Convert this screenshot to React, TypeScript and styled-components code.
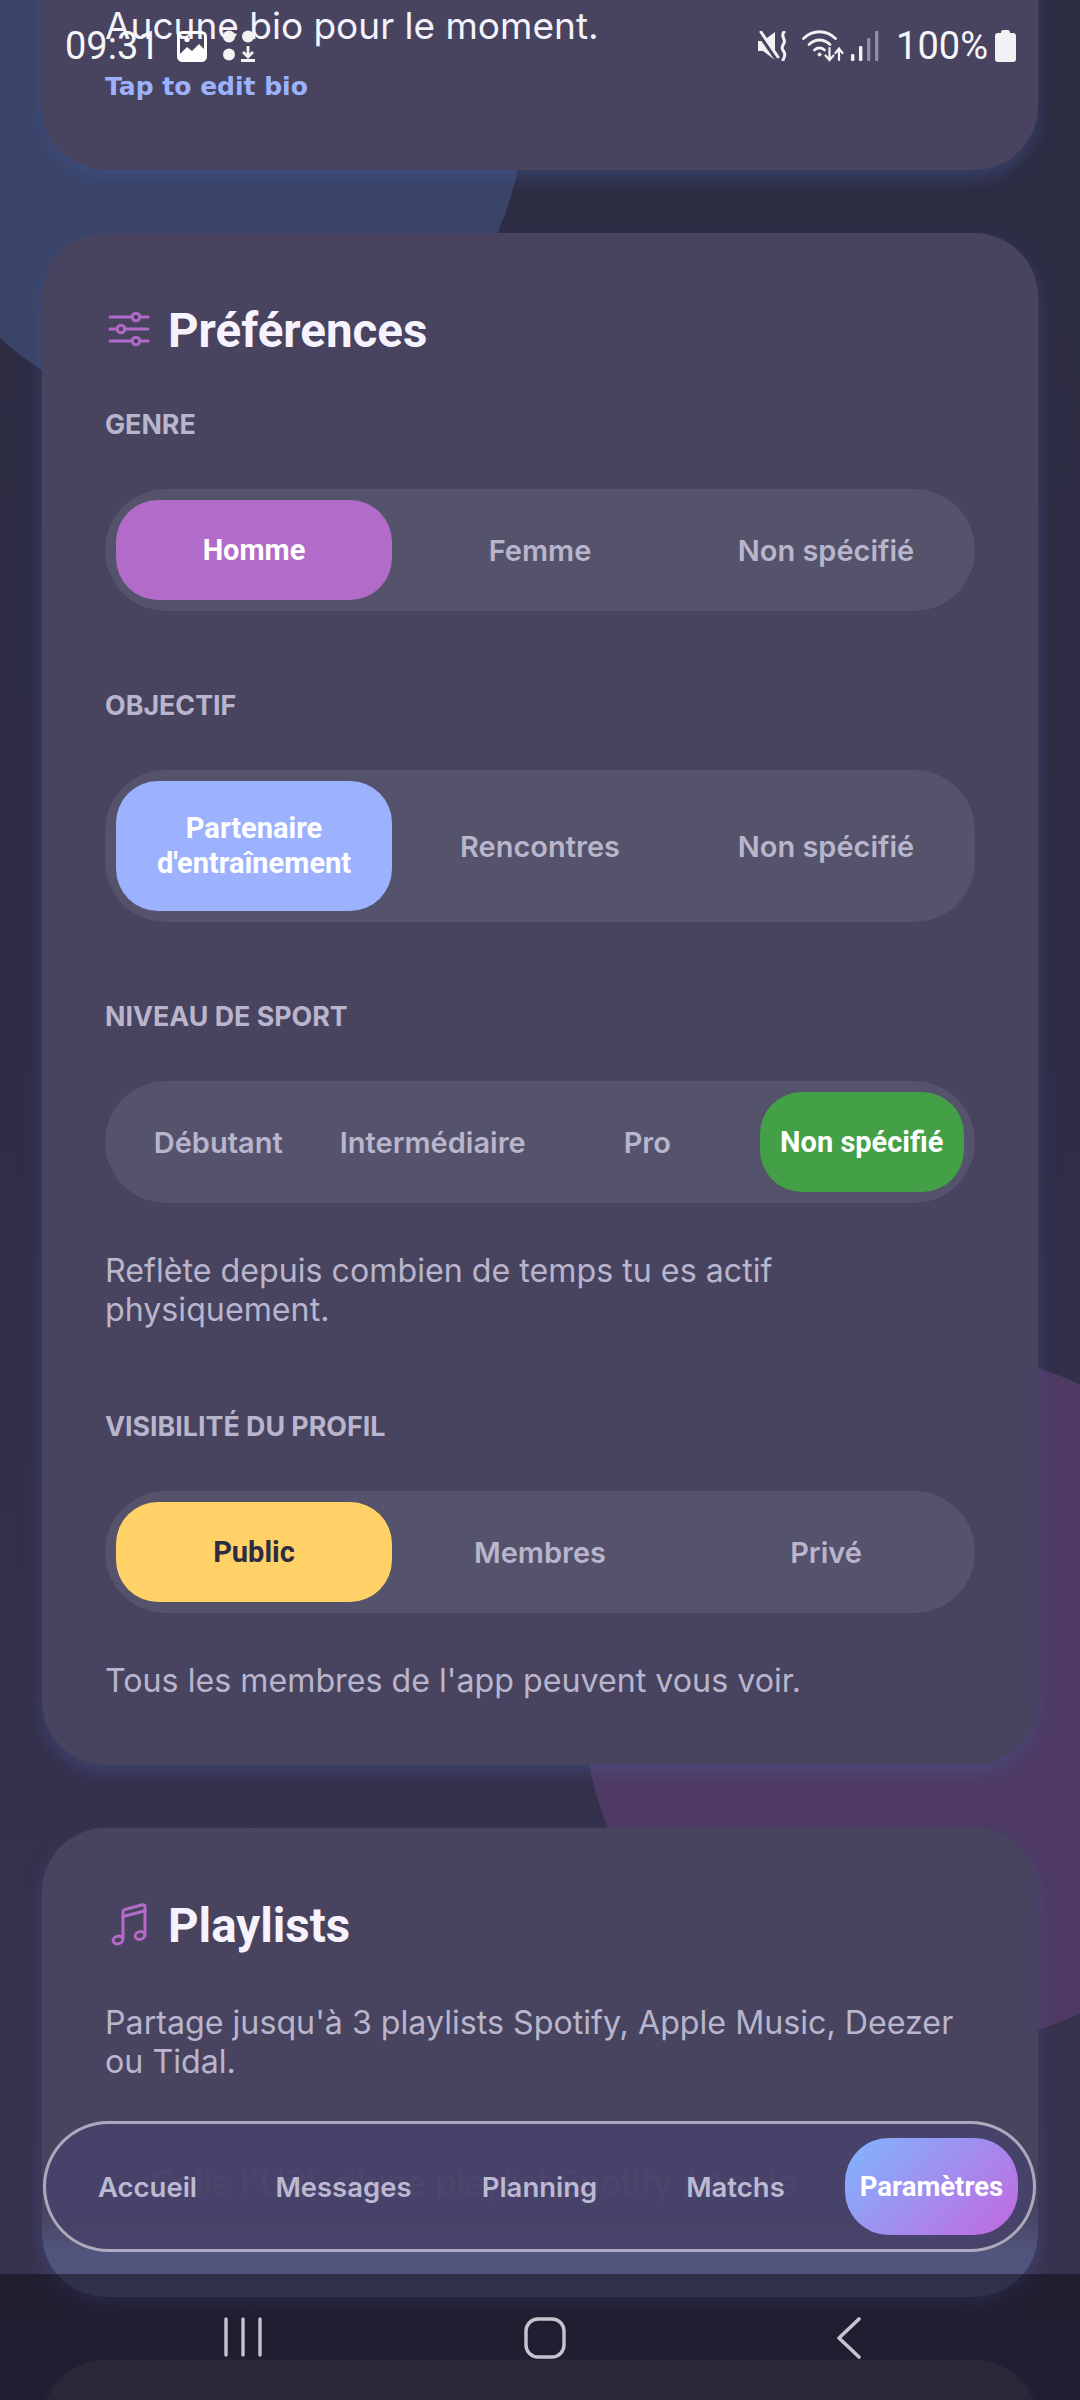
import React from 'react'
import styled, { createGlobalStyle } from 'styled-components'

const GlobalStyle = createGlobalStyle`
    html, body {
        margin: 0;
        padding: 0;
        background: #2c2c42;
    }
    * {
        box-sizing: border-box;
    }
`

type Option = { label: string; active?: string; dark?: boolean }

const genre: Option[] = [{ label: 'Homme', active: '#b26bc8' }, { label: 'Femme' }, { label: 'Non spécifié' }]
const goal: Option[] = [
    { label: "Partenaire d'entraînement", active: '#9db2ff' },
    { label: 'Rencontres' },
    { label: 'Non spécifié' },
]
const level: Option[] = [
    { label: 'Débutant' },
    { label: 'Intermédiaire' },
    { label: 'Pro' },
    { label: 'Non spécifié', active: '#43a047' },
]
const visibility: Option[] = [{ label: 'Public', active: '#ffd166', dark: true }, { label: 'Membres' }, { label: 'Privé' }]

const tabs = ['Accueil', 'Messages', 'Planning', 'Matchs', 'Paramètres']

function SegmentRow({ options }: { options: Option[] }) {
    return (
        <Segment>
            {options.map((o) => (
                <SegmentItem key={o.label} $active={o.active} $dark={o.dark}>
                    {o.label}
                </SegmentItem>
            ))}
        </Segment>
    )
}

function SlidersIcon() {
    return (
        <TitleIcon width="48" height="36" viewBox="0 0 48 36" fill="none" stroke="#b26bc8" strokeWidth="3" strokeLinecap="round">
            <path d="M5 6H27M35 6H43M5 18H12M20 18H43M5 30H27M35 30H43" />
            <circle cx="31" cy="6" r="3.8" />
            <circle cx="16" cy="18" r="3.8" />
            <circle cx="31" cy="30" r="3.8" />
        </TitleIcon>
    )
}

function MusicIcon() {
    return (
        <TitleIcon width="48" height="44" viewBox="0 0 48 44" fill="none" stroke="#b26bc8" strokeWidth="3" strokeLinecap="round" strokeLinejoin="round">
            <path d="M18 37V10C18 8.5 18.8 7.8 20 7.5L37.5 2.8C39 2.4 40 3.4 40 5V33" />
            <path d="M18 14.5L40 8.8" />
            <ellipse cx="13" cy="38" rx="5" ry="3.8" transform="rotate(-18 13 38)" />
            <ellipse cx="35" cy="33.5" rx="5" ry="3.8" transform="rotate(-18 35 33.5)" />
        </TitleIcon>
    )
}

function MuteIcon() {
    return (
        <MuteSvg width="30" height="30" viewBox="0 0 30 30" fill="none">
            <path d="M0 10H5L17 1V29L5 20H0Z" fill="#f2f2f5" />
            <path d="M1 3L19 29" stroke="#484460" strokeWidth="4" />
            <path d="M3 1L20 26" stroke="#f2f2f5" strokeWidth="3" strokeLinecap="round" />
            <path d="M26 1C22 5 28 8 26 12C24 16 23 17 26 21C28 24 26 27 25 29" stroke="#f2f2f5" strokeWidth="3" strokeLinecap="round" />
        </MuteSvg>
    )
}

function WifiIcon() {
    return (
        <WifiSvg width="42" height="32" viewBox="0 0 42 32" fill="none" stroke="#f2f2f5" strokeWidth="2.8" strokeLinecap="round">
            <path d="M1.5 8.5C11 -0.5 24 -0.5 33.5 8.5" />
            <path d="M7 14.5C13.5 8.5 21.5 8.5 28 14.5" />
            <path d="M12.5 20C15.5 17.3 19.5 17.3 22.5 20" />
            <circle cx="17.5" cy="24.5" r="1.6" fill="#f2f2f5" strokeWidth="0.8" />
            <path d="M27.5 18V29M23.5 25.5L27.5 30L31.5 25.5" strokeWidth="2.2" />
            <path d="M37 30V19M33.5 23L37 18.5L40.5 23" strokeWidth="2.2" />
        </WifiSvg>
    )
}

function SignalIcon() {
    return (
        <svg width="28" height="30" viewBox="0 0 28 30">
            <rect x="0" y="23" width="3.4" height="7" rx="1" fill="#f2f2f5" />
            <rect x="8" y="15" width="3.4" height="15" rx="1" fill="#f2f2f5" />
            <rect x="16" y="7" width="3.4" height="23" rx="1" fill="#8f8da3" />
            <rect x="24" y="0" width="3.4" height="30" rx="1" fill="#8f8da3" />
        </svg>
    )
}

function BatteryIcon() {
    return (
        <svg width="21" height="32" viewBox="0 0 21 32">
            <path d="M6 2.5C6 1 7 0 8 0H13C14 0 15 1 15 2.5V3H18C20 3 21 4 21 6V29C21 31 20 32 18 32H3C1 32 0 31 0 29V6C0 4 1 3 3 3H6Z" fill="#f2f2f5" />
        </svg>
    )
}

function GalleryIcon() {
    return (
        <svg width="30" height="31" viewBox="0 0 30 31" fill="none">
            <rect x="1.5" y="1.5" width="27" height="28" rx="4" stroke="#fff" strokeWidth="3" />
            <path d="M3 23L10 16L15 20L22 13L27 18V28H3Z" fill="#fff" />
            <circle cx="10" cy="8.5" r="2.6" fill="#fff" />
        </svg>
    )
}

function DotsIcon() {
    return (
        <DotsSvg width="34" height="32" viewBox="0 0 34 32">
            <circle cx="7" cy="6.5" r="6" fill="#f2f2f5" />
            <circle cx="26" cy="6.5" r="6" fill="#f2f2f5" />
            <circle cx="7" cy="24.5" r="6" fill="#f2f2f5" />
            <path d="M26 16V26M21 22L26 27L31 22M19 30.5H33" stroke="#f2f2f5" strokeWidth="2.8" fill="none" />
        </DotsSvg>
    )
}

export default function App() {
    return (
        <>
            <GlobalStyle />
            <Page>
                <BlueBlob />
                <PurpleBlob />

                <Scroll>
                    <Card>
                        <BioText>Aucune bio pour le moment.</BioText>
                        <BioEdit>Tap to edit bio</BioEdit>
                    </Card>

                    <Card $top>
                        <CardTitle>
                            <SlidersIcon />
                            Préférences
                        </CardTitle>

                        <Label>Genre</Label>
                        <SegmentRow options={genre} />

                        <Label $spaced>Objectif</Label>
                        <SegmentRow options={goal} />

                        <Label $spaced>Niveau de sport</Label>
                        <SegmentRow options={level} />
                        <Note>Reflète depuis combien de temps tu es actif physiquement.</Note>

                        <Label $spaced>Visibilité du profil</Label>
                        <SegmentRow options={visibility} />
                        <Note>Tous les membres de l'app peuvent vous voir.</Note>
                    </Card>

                    <Card $top $glow>
                        <CardTitle>
                            <MusicIcon />
                            Playlists
                        </CardTitle>
                        <PlaylistIntro>Partage jusqu'à 3 playlists Spotify, Apple Music, Deezer ou Tidal.</PlaylistIntro>
                        <UrlField>Colle l'URL d'une playlist Spotify / Apple</UrlField>
                    </Card>

                    <Card $top />
                </Scroll>

                <StatusBar>
                    <StatusGroup>
                        <Clock>09:31</Clock>
                        <GalleryIcon />
                        <DotsIcon />
                    </StatusGroup>
                    <StatusGroup>
                        <MuteIcon />
                        <WifiIcon />
                        <SignalIcon />
                        <Battery>100%</Battery>
                        <BatteryIcon />
                    </StatusGroup>
                </StatusBar>

                <TabBar>
                    {tabs.map((t) => (
                        <Tab key={t} $active={t === 'Paramètres'}>
                            {t}
                        </Tab>
                    ))}
                </TabBar>

                <SystemNav>
                    <svg width="38" height="40" viewBox="0 0 38 40" stroke="#c6c4ce" strokeWidth="3.4" strokeLinecap="round">
                        <path d="M2 2V38M19 2V38M36 2V38" />
                    </svg>
                    <HomeSvg width="42" height="42" viewBox="0 0 42 42" fill="none" stroke="#c6c4ce" strokeWidth="3.4">
                        <rect x="2" y="2" width="38" height="38" rx="12" />
                    </HomeSvg>
                    <svg width="24" height="42" viewBox="0 0 24 42" fill="none" stroke="#c6c4ce" strokeWidth="3.6" strokeLinecap="round" strokeLinejoin="round">
                        <path d="M22 2L2 21L22 40" />
                    </svg>
                </SystemNav>
            </Page>
        </>
    )
}

const Page = styled.div`
    position: relative;
    width: 1080px;
    height: 2400px;
    overflow: hidden;
    background: linear-gradient(180deg, #2c2c42 0%, #2f2d46 45%, #3a3350 100%);
    font-family: 'Inter', sans-serif;
`

const BlueBlob = styled.div`
    position: absolute;
    left: -102px;
    top: -206px;
    width: 626px;
    height: 626px;
    border-radius: 50%;
    background: #3a4468;
`

const PurpleBlob = styled.div`
    position: absolute;
    left: 583px;
    top: 1351px;
    width: 696px;
    height: 696px;
    border-radius: 50%;
    background: #4e3a63;
`

const Scroll = styled.div`
    position: relative;
    display: flex;
    flex-direction: column;
    gap: 63px;
    margin-top: -100px;
    padding: 0 42px;
`

const Card = styled.section<{ $top?: boolean; $glow?: boolean }>`
    padding: ${(p) => (p.$top ? '72px' : '104px')} 63px ${(p) => (p.$glow ? '55px' : '62px')};
    border-radius: 64px;
    background: ${(p) =>
        p.$glow ? 'linear-gradient(180deg, #484460 0, #484460 calc(100% - 85px), #51547c calc(100% - 45px))' : '#484460'};
    box-shadow: 0 8px 18px rgba(72, 88, 150, 0.45);
    &:last-child {
        height: 400px;
    }
`

const BioText = styled.p`
    margin: -1px 0 0;
    font-size: 37px;
    line-height: 46px;
    color: #f4f2fb;
`

const BioEdit = styled.div`
    margin: 21px 0 4px;
    font-family: 'DejaVu Sans', sans-serif;
    font-size: 25px;
    line-height: 34px;
    font-weight: 700;
    color: #9db2ff;
`

const CardTitle = styled.h2`
    display: flex;
    align-items: center;
    gap: 15px;
    margin: 0 0 50px;
    font-family: 'Roboto', sans-serif;
    font-size: 47.5px;
    line-height: 52px;
    font-weight: 700;
    color: #f6f3ff;
`

const TitleIcon = styled.svg`
    flex: none;
    margin-bottom: 4px;
`

const MuteSvg = styled.svg`
    margin-right: 4px;
`

const WifiSvg = styled.svg`
    margin-right: -3px;
`

const DotsSvg = styled.svg`
    margin-left: 5px;
`

const HomeSvg = styled.svg`
    margin-right: 10px;
`

const Label = styled.div<{ $spaced?: boolean }>`
    margin: ${(p) => (p.$spaced ? '77px' : '0')} 0 48px;
    font-size: 26.8px;
    line-height: 34px;
    font-weight: 700;
    text-transform: uppercase;
    color: #b9b5cc;
`

const Segment = styled.div`
    display: flex;
    gap: 10px;
    padding: 11px;
    border-radius: 61px;
    background: #55536b;
`

const SegmentItem = styled.div<{ $active?: string; $dark?: boolean }>`
    flex: 1 1 0;
    display: flex;
    align-items: center;
    justify-content: center;
    min-height: 100px;
    padding: 30px 8px;
    border-radius: 42px;
    text-align: center;
    font-family: ${(p) => (p.$active ? "'Roboto', sans-serif" : "'Inter', sans-serif")};
    font-size: 29px;
    line-height: 35px;
    font-weight: ${(p) => (p.$active ? 700 : 600)};
    background: ${(p) => p.$active ?? 'transparent'};
    color: ${(p) => (p.$dark ? '#2c2c42' : p.$active ? '#ffffff' : '#b9b5cc')};
`

const Note = styled.p`
    margin: 48px 0 0;
    padding-bottom: 3px;
    font-size: 32.2px;
    line-height: 39px;
    color: #b9b5cc;
`

const PlaylistIntro = styled(Note)`
    margin: 51px 0 0;
    padding-bottom: 0;
`

const UrlField = styled.div`
    width: 730px;
    height: 120px;
    margin-top: 41px;
    padding: 0 45px;
    display: flex;
    align-items: center;
    overflow: hidden;
    white-space: nowrap;
    border-radius: 40px;
    font-size: 34px;
    color: #908ca8;
`

const StatusBar = styled.div`
    position: absolute;
    top: 28px;
    left: 65px;
    right: 64px;
    display: flex;
    align-items: center;
    justify-content: space-between;
`

const StatusGroup = styled.div`
    display: flex;
    align-items: center;
    gap: 10px;
`

const Clock = styled.span`
    margin-right: 7px;
    font-family: 'Roboto', sans-serif;
    font-size: 38px;
    line-height: 36px;
    color: #f6f6f8;
`

const Battery = styled(Clock)`
    margin: 0 -3px 0 7px;
`

const TabBar = styled.nav`
    position: absolute;
    top: 2121px;
    left: 43px;
    width: 993px;
    height: 131px;
    padding: 0 15px;
    display: flex;
    align-items: center;
    gap: 23px;
    border: 3px solid rgba(255, 255, 255, 0.55);
    border-radius: 66px;
    background: rgba(72, 66, 105, 0.95);
`

const Tab = styled.div<{ $active?: boolean }>`
    flex: 1 1 0;
    height: 97px;
    display: flex;
    align-items: center;
    justify-content: center;
    border-radius: 44px;
    white-space: nowrap;
    font-family: ${(p) => (p.$active ? "'Roboto', sans-serif" : "'Inter', sans-serif")};
    font-size: 27.5px;
    font-weight: ${(p) => (p.$active ? 700 : 600)};
    color: ${(p) => (p.$active ? '#ffffff' : '#bdb9d2')};
    background: ${(p) => (p.$active ? 'linear-gradient(135deg, #7fb6ff 0%, #c267e0 100%)' : 'transparent')};
`

const SystemNav = styled.div`
    position: absolute;
    left: 0;
    right: 0;
    top: 2274px;
    height: 126px;
    padding: 43px 219px 0 224px;
    display: flex;
    align-items: flex-start;
    justify-content: space-between;
    background: rgba(6, 4, 10, 0.45);
`
